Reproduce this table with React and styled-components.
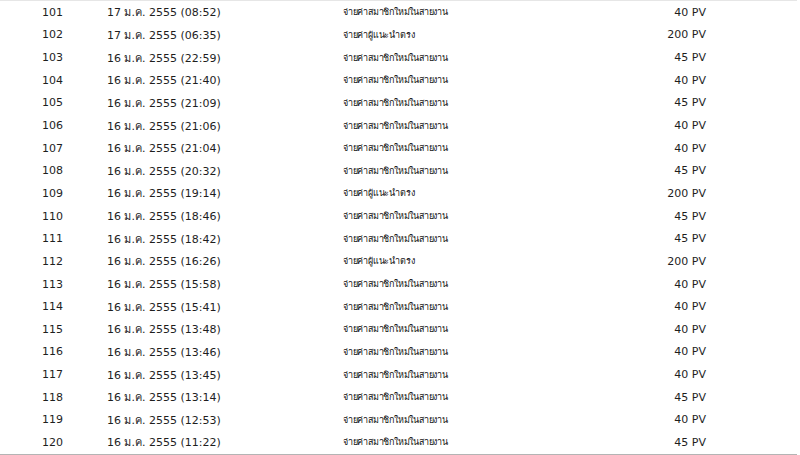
import React from "react";
import styled, { createGlobalStyle } from "styled-components";

const NEW_MEMBER = "จ่ายค่าสมาชิกใหม่ในสายงาน";
const REFERRER = "จ่ายค่าผู้แนะนำตรง";

const rows = [
  [101, "17 ม.ค. 2555 (08:52)", NEW_MEMBER, 40],
  [102, "17 ม.ค. 2555 (06:35)", REFERRER, 200],
  [103, "16 ม.ค. 2555 (22:59)", NEW_MEMBER, 45],
  [104, "16 ม.ค. 2555 (21:40)", NEW_MEMBER, 40],
  [105, "16 ม.ค. 2555 (21:09)", NEW_MEMBER, 45],
  [106, "16 ม.ค. 2555 (21:06)", NEW_MEMBER, 40],
  [107, "16 ม.ค. 2555 (21:04)", NEW_MEMBER, 40],
  [108, "16 ม.ค. 2555 (20:32)", NEW_MEMBER, 45],
  [109, "16 ม.ค. 2555 (19:14)", REFERRER, 200],
  [110, "16 ม.ค. 2555 (18:46)", NEW_MEMBER, 45],
  [111, "16 ม.ค. 2555 (18:42)", NEW_MEMBER, 45],
  [112, "16 ม.ค. 2555 (16:26)", REFERRER, 200],
  [113, "16 ม.ค. 2555 (15:58)", NEW_MEMBER, 40],
  [114, "16 ม.ค. 2555 (15:41)", NEW_MEMBER, 40],
  [115, "16 ม.ค. 2555 (13:48)", NEW_MEMBER, 40],
  [116, "16 ม.ค. 2555 (13:46)", NEW_MEMBER, 40],
  [117, "16 ม.ค. 2555 (13:45)", NEW_MEMBER, 40],
  [118, "16 ม.ค. 2555 (13:14)", NEW_MEMBER, 45],
  [119, "16 ม.ค. 2555 (12:53)", NEW_MEMBER, 40],
  [120, "16 ม.ค. 2555 (11:22)", NEW_MEMBER, 45]
];

const App = () => {
  return (
    <>
      <GlobalStyle />
      <Table>
        {rows.map(([no, date, desc, pv]) => (
          <Row key={no}>
            <NoCell>{no}</NoCell>
            <Cell>{date}</Cell>
            <DescCell>{desc}</DescCell>
            <PvCell>{pv} PV</PvCell>
            <Cell />
          </Row>
        ))}
      </Table>
    </>
  );
};

export default App;

const GlobalStyle = createGlobalStyle`
  body {
    margin: 0;
    background: #ffffff;
    font-family: "DejaVu Sans", "Noto Sans", sans-serif;
  }
`;

const Table = styled.div`
  width: 797px;
  border-top: 1px solid #e6e6e6;
  border-bottom: 1px solid #b4b4b4;
`;

const Row = styled.div`
  display: grid;
  grid-template-columns: 107px 236px 243px 120px 91px;
  align-items: center;
  height: 22.65px;
  font-size: 11px;
  color: #1e1e1e;
`;

const Cell = styled.div`
  white-space: nowrap;
`;

const NoCell = styled(Cell)`
  padding-left: 42px;
`;

const DescCell = styled(Cell)`
  font-size: 9px;
  letter-spacing: -0.2px;
  color: #111111;
`;

const PvCell = styled(Cell)`
  text-align: right;
`;
